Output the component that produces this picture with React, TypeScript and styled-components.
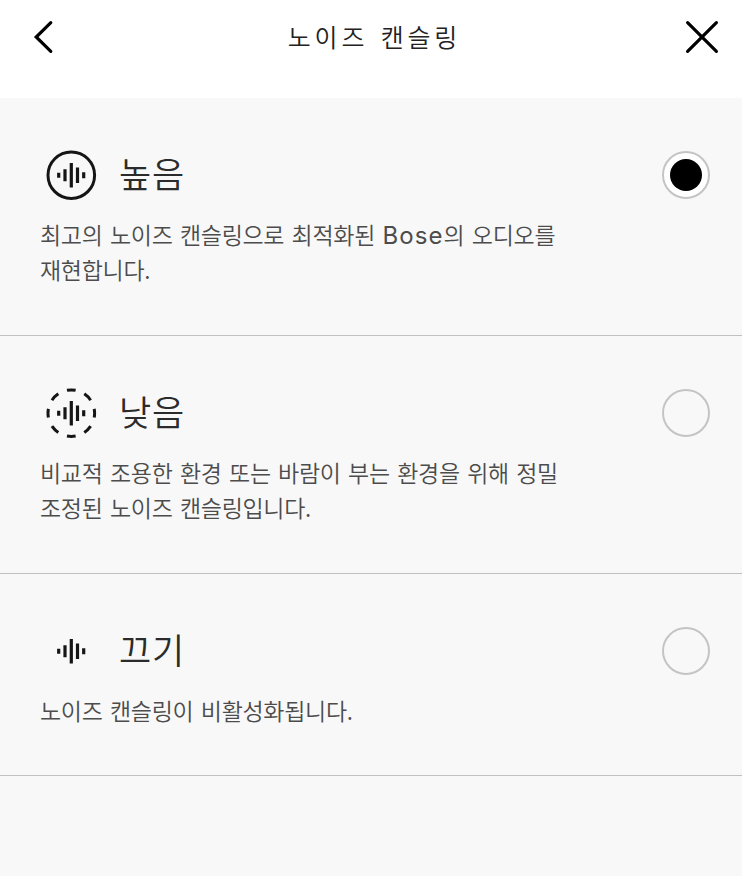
import React, { useState } from 'react';
import styled, { createGlobalStyle } from 'styled-components';

const GlobalStyle = createGlobalStyle`
  * { box-sizing: border-box; }
  body { margin: 0; background: #f8f8f8; font-family: "Noto Sans CJK KR", sans-serif; }
`;
const Screen = styled.main`
  min-height: 876px;
  background: #f8f8f8;
  overflow: hidden;
`;
const Header = styled.header`
  display: flex;
  align-items: flex-start;
  justify-content: space-between;
  height: 98px;
  padding: 17px 20px 0;
  background: #fff;
`;
const Title = styled.h1`
  margin: 0;
  padding-left: 7px;
  font-size: 25px;
  font-weight: 350;
  line-height: 38px;
  letter-spacing: 3.8px;
  word-spacing: 3.2px;
  color: #222;
`;
const IconButton = styled.button`
  display: flex;
  width: 44px;
  height: 40px;
  padding: 0;
  border: 0;
  background: none;
`;
const Option = styled.section<{ $height: number }>`
  height: ${p => p.$height}px;
  padding: 50px 32px 0 40px;
  border-bottom: 1px solid #c0c0c0;
`;
const OptionHead = styled.div`
  display: flex;
  align-items: center;
  height: 54px;
`;
const OptionTitle = styled.h2`
  flex: 1;
  margin: 0 0 0 17px;
  padding-bottom: 5px;
  font-size: 35px;
  font-weight: 350;
  line-height: 49px;
  letter-spacing: 0.8px;
  color: #2b2b2b;
`;
const Radio = styled.button<{ $on: boolean }>`
  display: grid;
  place-items: center;
  width: 48px;
  height: 48px;
  padding: 0;
  border: 2px solid #c4c4c4;
  border-radius: 50%;
  background: ${p => (p.$on ? '#fff' : 'transparent')};
`;
const RadioDot = styled.span`
  width: 32px;
  height: 32px;
  border-radius: 50%;
  background: #000;
`;
const Description = styled.p`
  margin: 15px 0 0;
  font-size: 23px;
  font-weight: 350;
  line-height: 35px;
  letter-spacing: -0.3px;
  word-spacing: 2.55px;
  color: #4c4c4c;
  white-space: pre-line;
`;
const Latin = styled.span`
  font-family: Inter, sans-serif;
  font-size: 24px;
  font-weight: 400;
  line-height: 0;
  letter-spacing: 1.1px;
`;

type Level = 'high' | 'low' | 'off';

const LevelIcon = ({ level }: { level: Level }) => (
  <svg width="62" height="54" viewBox="0 0 62 54" fill="none" stroke="#151515" strokeWidth="3">
    {level !== 'off' && (
      <circle
        cx="31.3"
        cy="27.2"
        r="23.3"
        pathLength="144"
        strokeDasharray={level === 'low' ? '8.8 9.2' : undefined}
        strokeDashoffset="4.4"
      />
    )}
    <path d="M18.7 24.8v5M25 21.2v12M31.3 15v24.6M37.5 19.6v15.4M43.7 24.2v6" strokeWidth="3.2" />
  </svg>
);

const App = () => {
  const [level, setLevel] = useState<Level>('high');
  const options: { id: Level; title: string; height: number; text: React.ReactNode }[] = [
    { id: 'high', title: '높음', height: 238, text: <>최고의 노이즈 캔슬링으로 최적화된 <Latin>Bose</Latin>의 오디오를{'\n'}재현합니다.</> },
    { id: 'low', title: '낮음', height: 238, text: '비교적 조용한 환경 또는 바람이 부는 환경을 위해 정밀\n조정된 노이즈 캔슬링입니다.' },
    { id: 'off', title: '끄기', height: 202, text: '노이즈 캔슬링이 비활성화됩니다.' },
  ];
  return (
    <Screen>
      <GlobalStyle />
      <Header>
        <IconButton aria-label="뒤로">
          <svg width="44" height="40" fill="none" stroke="#000" strokeWidth="3.2" strokeLinecap="round">
            <path d="M30.8 5.6L16.2 20L30.8 34.4" />
          </svg>
        </IconButton>
        <Title>노이즈 캔슬링</Title>
        <IconButton aria-label="닫기">
          <svg width="44" height="40" fill="none" stroke="#000" strokeWidth="3.2" strokeLinecap="round">
            <path d="M9.6 5.6L38.4 34.4M38.4 5.6L9.6 34.4" />
          </svg>
        </IconButton>
      </Header>
      {options.map(o => (
        <Option key={o.id} $height={o.height}>
          <OptionHead>
            <LevelIcon level={o.id} />
            <OptionTitle>{o.title}</OptionTitle>
            <Radio $on={level === o.id} aria-label={o.title} onClick={() => setLevel(o.id)}>
              {level === o.id && <RadioDot />}
            </Radio>
          </OptionHead>
          <Description>{o.text}</Description>
        </Option>
      ))}
    </Screen>
  );
};

export default App;
